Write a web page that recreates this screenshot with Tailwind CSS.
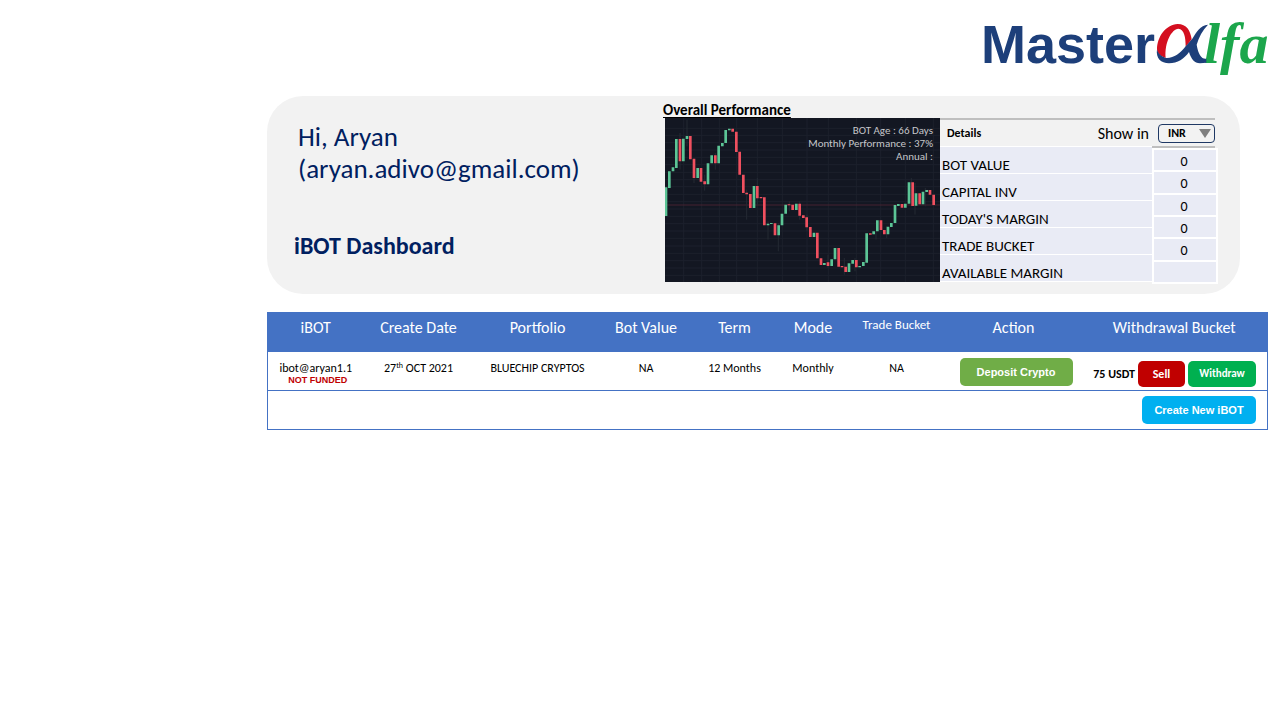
<!DOCTYPE html>
<html lang="en">
<head>
<meta charset="utf-8">
<meta name="viewport" content="width=device-width, initial-scale=1">
<title>iBOT Dashboard</title>
<script src="https://cdn.jsdelivr.net/npm/@tailwindcss/browser@4"></script>
</head>
<body class="bg-white font-[Carlito,Lato,sans-serif] text-black">
<header class="flex h-24 justify-end pr-1 pt-3">
  <a href="#" aria-label="Master alfa" class="block">
    <svg class="block h-[72px] w-[300px]" viewBox="976 12 300 72">
      <text x="981" y="63" font-family="Liberation Sans" font-weight="700" font-size="54" fill="#1d3f7a">Master</text>
      <text x="1204" y="63" font-family="Liberation Serif" font-style="italic" font-weight="700" font-size="58" fill="#1ca64c">lfa</text>
      <svg x="1145" y="12" width="70" height="60" viewBox="0 0 210 180">
        <path d="M36 112C36 75 62 38 98 36C125 36 136 55 140 82L122 104C122 75 118 52 100 50C80 52 58 90 62 138C48 134 36 124 36 112Z" fill="#d40f20"/>
        <path d="M189 38C165 40 155 60 142 80L122 103C105 125 85 140 62 138C50 134 38 124 36 112C32 140 48 154 72 154C98 154 118 140 132 120C138 140 148 154 165 154L184 152V140C170 142 160 128 155 98C162 75 172 55 189 38Z" fill="#1d3f7a"/>
      </svg>
    </svg>
  </a>
</header>

<main class="ml-[267px] mr-3">
  <section class="mr-7 flex h-[198px] rounded-[36px] bg-[#f2f2f2] pr-[22px]">
    <div class="flex-1 pl-[27px] pt-[25px] text-[#002060]">
      <p class="pl-1 text-[27px] leading-8">Hi, Aryan<br>(aryan.adivo@gmail.com)</p>
      <h1 class="mt-[45px] text-[24px] font-bold leading-8">iBOT Dashboard</h1>
    </div>

    <div class="w-[277px] pt-[7px]">
      <h2 class="text-[15px] font-bold leading-[15px] underline underline-offset-2">Overall Performance</h2>
      <div class="relative ml-[2px] h-[164px] bg-[#131722]">
        <svg class="block h-full w-full" viewBox="15 60 825 492" preserveAspectRatio="none" fill="none">
          <path d="M71 60V552M125 60V552M178 60V552M230 60V552M292 60V552M367 60V552M441 60V552M505 60V552M589 60V552M662 60V552M736 60V552M820 60V552M15 91H840M15 112H840M15 134H840M15 156H840M15 178H840M15 200H840M15 223H840M15 245H840M15 266H840M15 289H840M15 311H840M15 333H840M15 355H840M15 377H840M15 399H840M15 421H840M15 444H840M15 466H840M15 488H840M15 510H840M15 532H840" stroke="#1c212c" stroke-width="3"/>
          <path d="M15 321H840" stroke="#472330" stroke-width="3"/>
          <path d="M60 105V215M81 65V145M102 190V255M134 230V278M166 165V215M260 275V365M292 240V320M324 370V425M355 375V460M388 310V340M419 310V365M441 350V400M504 470V510M553 480V530M585 480V520M648 400V425M680 385V420M754 240V325M765 255V350M796 270V325" stroke="#242a33" stroke-width="3"/>
          <path d="M18 268V354M28 220V270M39 208V220M49 123V210M70 122V190M81 114V123M113 210V240M144 196V259M155 172V196M176 143V196M187 135V145M197 96V135M208 92V97M282 264V330M324 377V382M334 375V378M356 382V412M366 347V382M377 320V347M409 317V336M462 404V417M493 495V501M515 484V504M525 450V484M567 496V522M578 486V497M599 504V508M610 492V504M620 406V494M641 400V409M652 367V400M684 386V409M694 375V387M705 321V375M715 318V324M736 317V329M747 253V317M768 286V323M789 281V319M800 276V282" stroke="#5cc596" stroke-width="8"/>
          <path d="M60 123V190M91 114V184M102 182V240M123 210V251M134 250V259M166 172V196M218 92V101M229 101V162M239 161V230M250 230V285M260 284V289M271 288V330M292 264V301M303 297V301M313 298V382M345 376V412M387 319V322M398 320V336M419 317V353M430 352V360M440 358V388M451 387V417M472 404V481M483 481V501M504 493V504M536 450V506M546 504V508M557 506V522M589 486V508M631 406V410M663 367V396M673 396V409M726 318V329M758 253V324M779 286V319M810 276V290M821 290V321" stroke="#f0505f" stroke-width="8"/>
        </svg>
        <p class="absolute right-[7px] top-[6px] text-right text-[11px] leading-[13px] text-[#c5c6c9]">BOT Age : 66 Days<br>Monthly Performance : 37%<br>Annual :</p>
      </div>
    </div>

    <div class="flex w-[278px] flex-col pt-[22px]">
      <div class="mr-[3px] flex h-7 items-center border-t-2 border-[#bfbfbf] pl-[7px]">
        <h3 class="flex-1 text-[12px] font-bold">Details</h3>
        <label for="currency" class="pr-[9px] pt-[2px] text-[16px]">Show in</label>
        <div class="relative">
          <select id="currency" class="block h-[19px] w-[57px] appearance-none rounded-[4px] border border-[#1f3864] bg-transparent pl-[9px] text-[12px] font-bold leading-4 text-black"><option>INR</option></select>
          <svg class="pointer-events-none absolute right-1 top-[5px] h-[9px] w-3" viewBox="0 0 12 9"><path d="M0 0H12L6 9Z" fill="#7f7f7f"/></svg>
        </div>
      </div>
      <div class="flex">
        <table class="h-[136px] flex-1 border-collapse bg-[#e9ebf5] text-left text-[15px] leading-4">
          <tbody>
            <tr class="h-[27px] border-y border-white"><th class="pl-[2px] pt-[10px] font-normal">BOT VALUE</th></tr>
            <tr class="h-[27px] border-y border-white"><th class="pl-[2px] pt-[10px] font-normal">CAPITAL INV</th></tr>
            <tr class="h-[27px] border-y border-white"><th class="pl-[2px] pt-[10px] font-normal">TODAY'S MARGIN</th></tr>
            <tr class="h-[27px] border-y border-white"><th class="pl-[2px] pt-[10px] font-normal">TRADE BUCKET</th></tr>
            <tr class="h-[27px] border-y border-white"><th class="pl-[2px] pt-[10px] font-normal">AVAILABLE MARGIN</th></tr>
          </tbody>
        </table>
        <div class="w-[66px]">
          <div class="mr-[3px] h-[2px] bg-[#bfbfbf]"></div>
          <table class="h-[136px] w-full border-collapse border-2 border-white bg-[#e9ebf5] text-center text-[14px] leading-4">
            <tbody>
              <tr class="border-y-2 border-white"><td class="pt-1 pr-[2px]">0</td></tr>
              <tr class="border-y-2 border-white"><td class="pt-1 pr-[2px]">0</td></tr>
              <tr class="border-y-2 border-white"><td class="pt-1 pr-[2px]">0</td></tr>
              <tr class="border-y-2 border-white"><td class="pt-1 pr-[2px]">0</td></tr>
              <tr class="border-y-2 border-white"><td class="pt-1 pr-[2px]">0</td></tr>
              <tr class="border-y-2 border-white"><td class="pt-1 pr-[2px]">&nbsp;</td></tr>
            </tbody>
          </table>
        </div>
      </div>
    </div>
  </section>

  <table class="mt-[18px] w-full table-fixed border-collapse border border-[#4472c4] text-center text-[12px] leading-[14px]">
    <colgroup>
      <col class="w-[96px]"><col class="w-[110px]"><col class="w-[128px]"><col class="w-[89px]"><col class="w-[88px]"><col class="w-[69px]"><col class="w-[98px]"><col class="w-[136px]"><col>
    </colgroup>
    <thead class="bg-[#4472c4] text-[16px] leading-5 text-white">
      <tr class="h-[39px] align-top">
        <th class="pt-[5px] font-normal">iBOT</th>
        <th class="pt-[5px] font-normal">Create Date</th>
        <th class="pt-[5px] font-normal">Portfolio</th>
        <th class="pt-[5px] font-normal">Bot Value</th>
        <th class="pt-[5px] font-normal">Term</th>
        <th class="pt-[5px] font-normal">Mode</th>
        <th class="pt-[2px] text-[13px] font-normal">Trade Bucket</th>
        <th class="pt-[5px] font-normal">Action</th>
        <th class="pt-[5px] font-normal">Withdrawal Bucket</th>
      </tr>
    </thead>
    <tbody>
      <tr class="h-[39px] border-b border-[#4472c4] align-top">
        <td class="pt-[9px]">ibot@aryan1.1<div class="pl-1 font-[Liberation_Sans] text-[9px] font-bold leading-[10px] text-[#c00000]">NOT FUNDED</div></td>
        <td class="pt-[9px]">27<sup class="text-[8px]">th</sup> OCT 2021</td>
        <td class="pt-[9px]">BLUECHIP CRYPTOS</td>
        <td class="pt-[9px]">NA</td>
        <td class="pt-[9px]">12 Months</td>
        <td class="pt-[9px]">Monthly</td>
        <td class="pt-[9px]">NA</td>
        <td class="pl-[14px] pt-[6px]"><button type="button" class="block h-7 w-[113px] rounded-[5px] bg-[#70ad47] font-[Liberation_Sans] text-[11px] font-bold text-white">Deposit Crypto</button></td>
        <td class="pr-[11px] pt-[9px]">
          <div class="flex items-center justify-end gap-[3px]">
            <span class="text-[12px] font-bold">75 USDT</span>
            <button type="button" class="h-[26px] w-[47px] rounded-[5px] bg-[#c00000] text-[12px] font-bold text-white">Sell</button>
            <button type="button" class="h-[26px] w-[68px] rounded-[5px] bg-[#00b050] text-[11px] font-bold text-white">Withdraw</button>
          </div>
        </td>
      </tr>
      <tr class="h-[39px] align-top">
        <td colspan="9" class="pr-[11px] pt-[5px]"><button type="button" class="ml-auto block h-7 w-[114px] rounded-[5px] bg-[#00b0f0] font-[Liberation_Sans] text-[11px] font-bold text-white">Create New iBOT</button></td>
      </tr>
    </tbody>
  </table>
</main>
</body>
</html>
